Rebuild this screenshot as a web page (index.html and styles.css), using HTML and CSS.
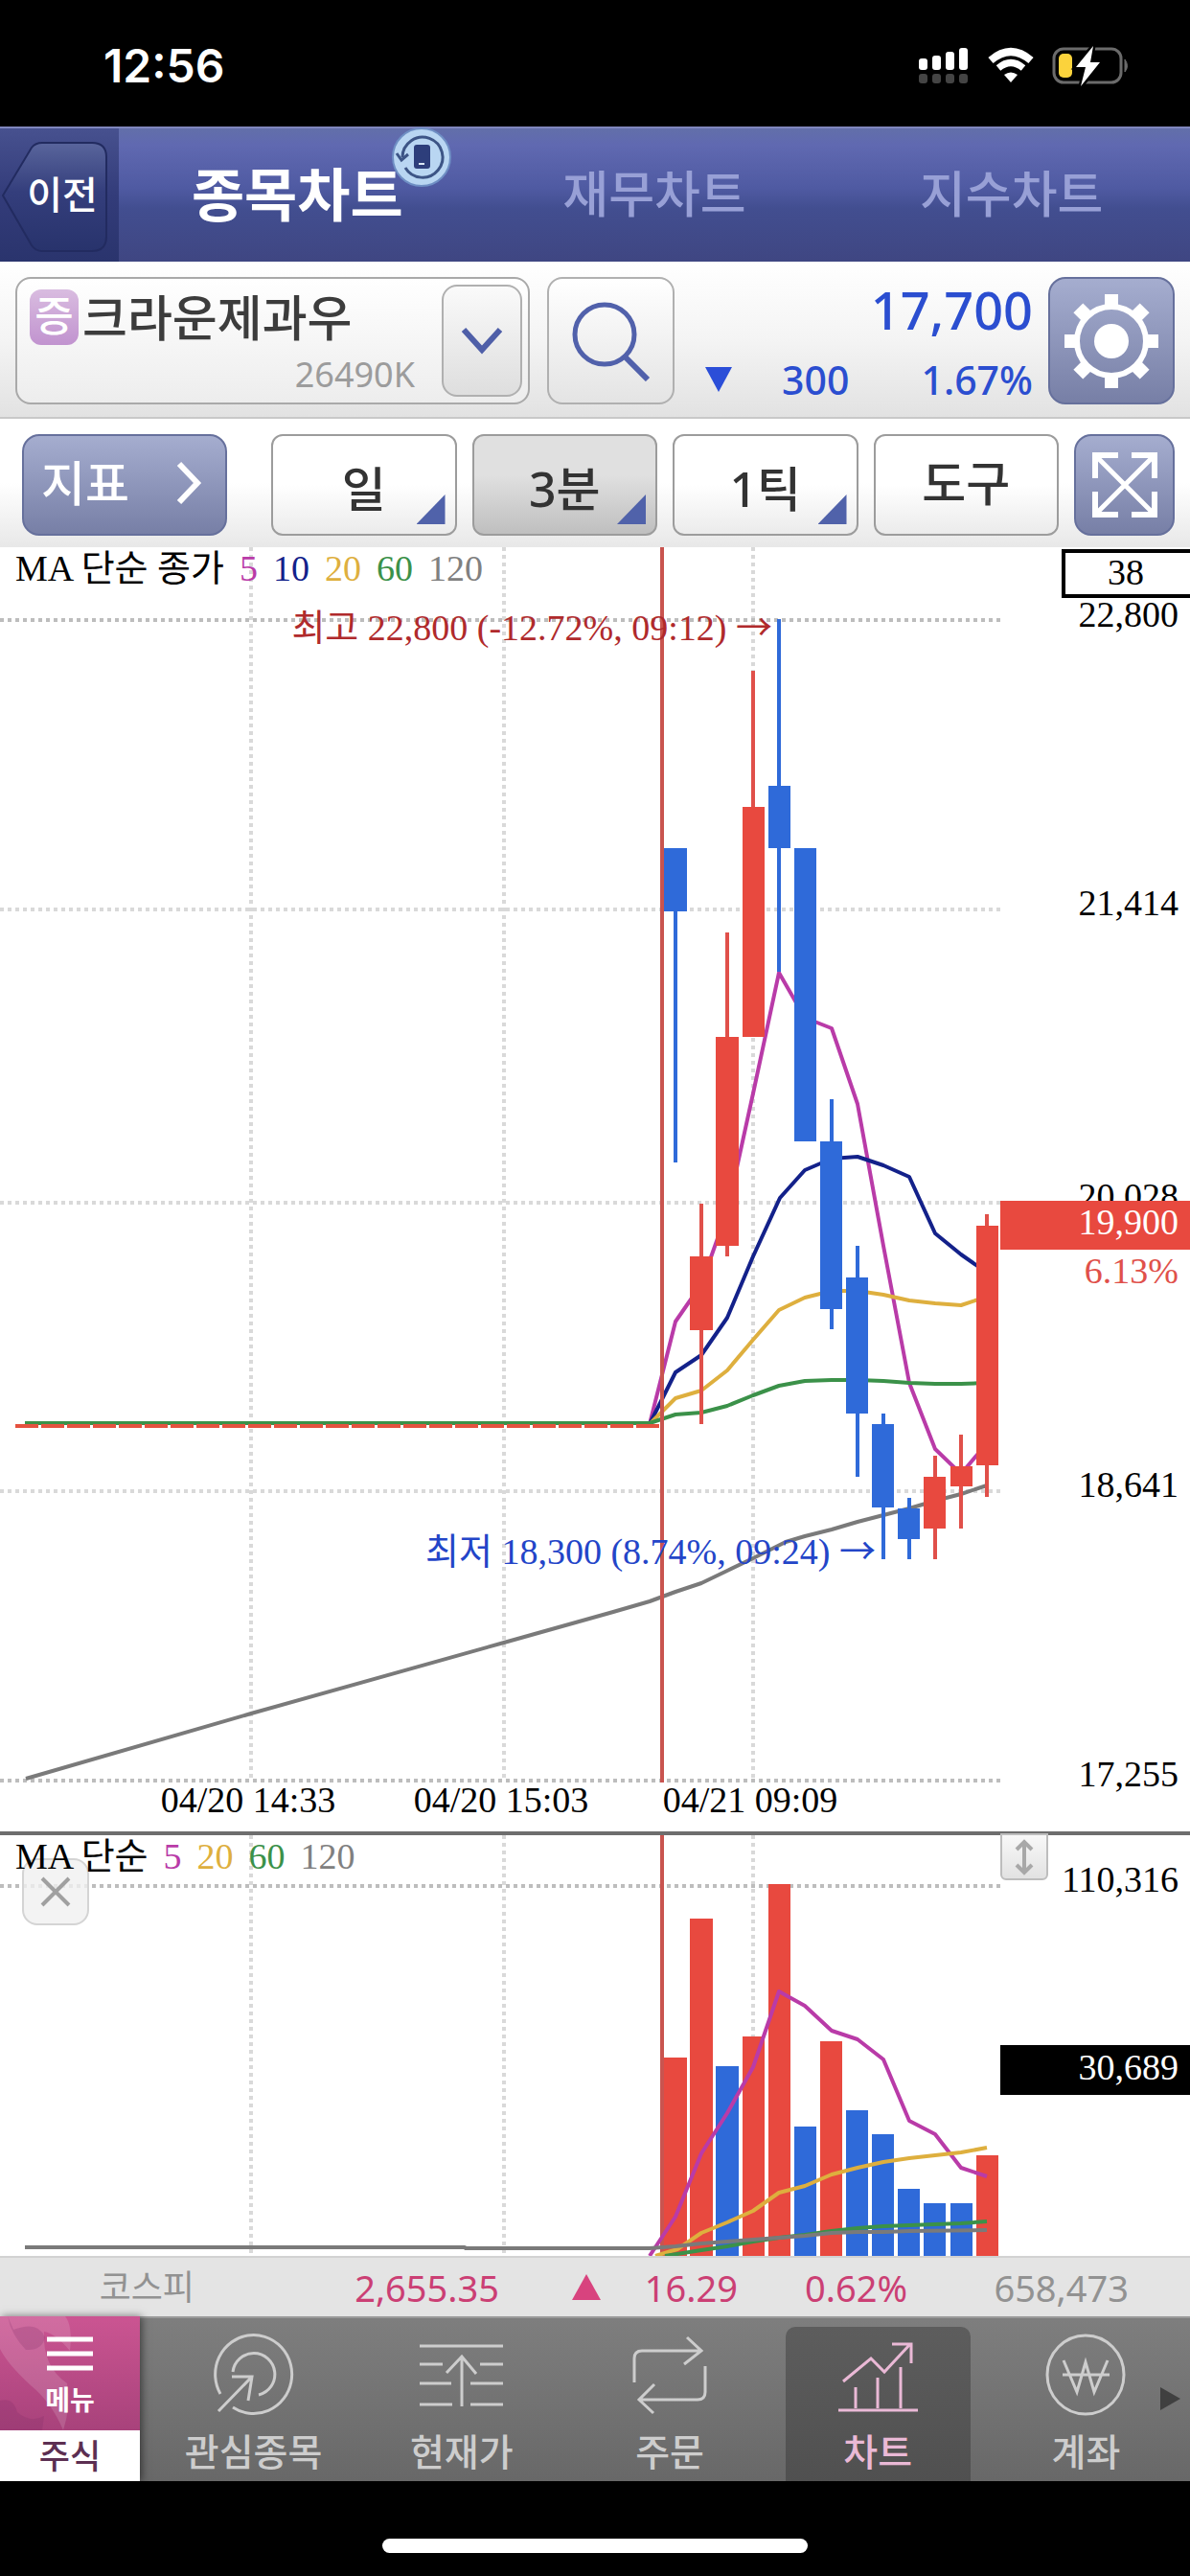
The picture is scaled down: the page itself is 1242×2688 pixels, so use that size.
FILE: index.html
```html
<!DOCTYPE html>
<html lang="ko">
<head>
    <meta charset="UTF-8">
    <meta name="viewport" content="width=device-width, initial-scale=1.0">
    <title>종목차트</title>
    <link rel="stylesheet" href="styles.css">
</head>
<body>
    <div class="status-bar">
        <span class="clock">12:56</span>
        <svg class="status-icons" width="222" height="44" viewBox="0 0 222 44">
            <g fill="#fff">
                <rect x="2" y="15" width="9" height="12" rx="3"/>
                <rect x="16" y="12" width="9" height="15" rx="3"/>
                <rect x="30" y="8" width="9" height="19" rx="3"/>
                <rect x="44" y="4" width="9" height="23" rx="3"/>
            </g>
            <g fill="#444">
                <rect x="2" y="31" width="9" height="10" rx="3"/>
                <rect x="16" y="31" width="9" height="10" rx="3"/>
                <rect x="30" y="31" width="9" height="10" rx="3"/>
                <rect x="44" y="31" width="9" height="10" rx="3"/>
            </g>
            <path d="M77 17 Q98 -1 119 17" fill="none" stroke="#fff" stroke-width="8"/>
            <path d="M85 25 Q98 14 111 25" fill="none" stroke="#fff" stroke-width="7"/>
            <path d="M91 32 Q98 27 105 32 L98 40 Z" fill="#fff"/>
            <rect x="143" y="5" width="70" height="35" rx="10" fill="none" stroke="#6b6b6b" stroke-width="3"/>
            <path d="M217 16 q5 7 0 13 z" fill="#6b6b6b" stroke="#6b6b6b"/>
            <rect x="148" y="10" width="14" height="25" rx="5" fill="#fbd33c"/>
            <path d="M184 2 L166 24 H176 L171 44 L191 19 H181 Z" fill="#fff" stroke="#000" stroke-width="5" paint-order="stroke"/>
        </svg>
    </div>

    <header class="header">
        <button class="back" type="button">
            <svg class="back-shape" width="124" height="141" viewBox="0 0 124 141">
                <defs>
                    <linearGradient id="backFill" x1="0" y1="0" x2="0" y2="1">
                        <stop offset="0" stop-color="#59659c"/>
                        <stop offset="0.45" stop-color="#343e7c"/>
                        <stop offset="1" stop-color="#28336c"/>
                    </linearGradient>
                </defs>
                <path d="M3 70 L33 20 Q37 15 44 15 H96 Q111 15 111 30 V113 Q111 128 96 128 H44 Q37 128 33 122 Z" fill="url(#backFill)" stroke="#222b60" stroke-width="2"/>
            </svg>
            <span class="back-text">이전</span>
        </button>
        <nav class="tabs">
            <a href="#" class="tab active">종목차트
                <svg class="rotate-badge" width="64" height="64" viewBox="0 0 64 64">
                    <circle cx="32" cy="32" r="30" fill="#b9d6f2" stroke="#6f8fc4" stroke-width="2"/>
                    <rect x="24" y="19" width="17" height="25" rx="3" fill="#2d3e7b"/>
                    <path d="M29 39 h6" stroke="#dbe8f7" stroke-width="2"/>
                    <path d="M12 32 A21 21 0 1 1 15 43" fill="none" stroke="#3d5586" stroke-width="3"/>
                    <path d="M6 28 L11 35 L18 29" fill="none" stroke="#3d5586" stroke-width="3"/>
                </svg>
            </a>
            <a href="#" class="tab">재무차트</a>
            <a href="#" class="tab">지수차트</a>
        </nav>
    </header>

    <section class="stock">
        <div class="picker">
            <div class="picker-info">
                <div class="picker-name"><span class="margin-badge">증</span>크라운제과우</div>
                <div class="picker-code">26490K</div>
            </div>
            <button class="picker-open" type="button" aria-label="종목 목록">
                <svg width="44" height="30" viewBox="0 0 44 30"><path d="M3 3 L22 24 L41 3" fill="none" stroke="#4f5fa8" stroke-width="6"/></svg>
            </button>
        </div>
        <button class="search" type="button" aria-label="검색">
            <svg width="84" height="84" viewBox="0 0 84 84">
                <circle cx="35" cy="35" r="31" fill="none" stroke="#5161ab" stroke-width="5"/>
                <path d="M56 58 L80 82" stroke="#5161ab" stroke-width="6"/>
            </svg>
        </button>
        <div class="quote">
            <div class="price">17,700</div>
            <div class="change">
                <svg width="28" height="26" viewBox="0 0 28 26"><path d="M0 0 H28 L14 26 Z" fill="#2b4ed8"/></svg>
                <span class="diff">300</span>
                <span class="rate">1.67%</span>
            </div>
        </div>
        <button class="settings" type="button" aria-label="설정">
            <svg width="100" height="100" viewBox="-50 -50 100 100">
                <g fill="#fff">
                    <g id="teeth"><rect x="-7" y="-49" width="14" height="13"/><rect x="-7" y="36" width="14" height="13"/></g>
                    <use href="#teeth" transform="rotate(45)"/>
                    <use href="#teeth" transform="rotate(90)"/>
                    <use href="#teeth" transform="rotate(135)"/>
                    <circle r="18"/>
                </g>
                <circle r="36" fill="none" stroke="#fff" stroke-width="6"/>
            </svg>
        </button>
    </section>

    <section class="toolbar">
        <button class="tool indicator" type="button">지표
            <svg width="28" height="46" viewBox="0 0 28 46"><path d="M4 3 L23 23 L4 43" fill="none" stroke="#fff" stroke-width="6"/></svg>
        </button>
        <div class="periods">
            <button class="tool period" type="button">일</button>
            <button class="tool period selected" type="button">3분</button>
            <button class="tool period" type="button">1틱</button>
            <button class="tool" type="button">도구</button>
        </div>
        <button class="tool expand" type="button" aria-label="전체화면">
            <svg width="70" height="70" viewBox="0 0 70 70" fill="none" stroke="#fff" stroke-width="6">
                <path d="M4 28 V4 H28 M42 4 H66 V28 M66 42 V66 H42 M28 66 H4 V42"/>
                <path d="M4 4 L66 66 M66 4 L4 66" stroke-width="5"/>
            </svg>
        </button>
    </section>

    <main>
        <section class="pane price-pane">
            <svg class="plot" viewBox="0 0 1242 1340">
                <g class="grid">
                    <path d="M262 0 V1287 M526 0 V1287 M786 0 V1287 M0 378 H1044 M0 684 H1044 M0 985 H1044"/>
                    <path class="edge" d="M0 76 H1044 M0 1287 H1044"/>
                </g>
                <g class="ma">
                    <polyline class="ma120" points="27,1285 262,1217 526,1143 640,1111 678,1100 705,1090 732,1081 759,1068 786,1055 820,1038 840,1032 868,1025 895,1017 922,1010 949,1003 976,995 1003,988 1030,979"/>
                    <polyline class="ma5" points="678,915 705,808 732,769 759,693 786,570 813,444 840,491 868,502 895,581 922,729 949,872 976,941 1003,967 1030,935"/>
                    <polyline class="ma10" points="678,915 705,861 732,843 759,804 786,740 814,679 840,650 868,638 895,636 922,645 949,657 976,716 1003,738 1030,757"/>
                    <polyline class="ma20" points="678,915 705,888 732,880 759,859 786,827 813,796 840,783 868,776 895,776 922,780 949,786 976,789 1003,791 1030,782"/>
                    <polyline class="ma60" points="26,914 678,914 705,905 732,903 759,896 786,885 813,875 840,870 868,869 895,869 922,870 949,872 976,873 1003,873 1030,872"/>
                </g>
                <path class="flat" d="M16 917 H691"/>
                <path class="session" d="M691 0 V1289"/>
                <g class="down">
                    <path d="M705 380 V642 M813 75 V443 M868 576 V816 M895 729 V970 M922 904 V1056 M949 992 V1056"/>
                    <rect x="693" y="314" width="24" height="66"/>
                    <rect x="802" y="249" width="23" height="65"/>
                    <rect x="829" y="314" width="23" height="306"/>
                    <rect x="856" y="620" width="23" height="175"/>
                    <rect x="883" y="762" width="23" height="142"/>
                    <rect x="910" y="915" width="23" height="87"/>
                    <rect x="937" y="1003" width="23" height="32"/>
                </g>
                <g class="up">
                    <path d="M732 685 V915 M759 402 V740 M786 129 V511 M976 948 V1056 M1003 926 V1024 M1030 696 V991"/>
                    <rect x="720" y="740" width="24" height="77"/>
                    <rect x="747" y="511" width="24" height="218"/>
                    <rect x="775" y="271" width="23" height="240"/>
                    <rect x="964" y="970" width="23" height="54"/>
                    <rect x="992" y="959" width="23" height="21"/>
                    <rect x="1019" y="708" width="23" height="250"/>
                </g>
                <text class="high" x="806" y="97" text-anchor="end">최고 22,800 (-12.72%, 09:12) <tspan class="arrow">→</tspan></text>
                <text class="low" x="914" y="1061" text-anchor="end">최저 18,300 (8.74%, 09:24) <tspan class="arrow">→</tspan></text>
                <g class="axis" text-anchor="end">
                    <text x="1230" y="83">22,800</text>
                    <text x="1230" y="384">21,414</text>
                    <text x="1230" y="690">20,028</text>
                    <text x="1230" y="991">18,641</text>
                    <text x="1230" y="1293">17,255</text>
                </g>
                <g class="axis" text-anchor="middle">
                    <text x="259" y="1320">04/20 14:33</text>
                    <text x="523" y="1320">04/20 15:03</text>
                    <text x="783" y="1320">04/21 09:09</text>
                </g>
                <rect x="1110" y="4" width="140" height="47" fill="#fff" stroke="#000" stroke-width="4"/>
                <text x="1175" y="39" text-anchor="middle">38</text>
                <rect x="1044" y="682" width="198" height="51" fill="#e8493f"/>
                <text class="tag" x="1230" y="717" text-anchor="end">19,900</text>
                <text class="tag-rate" x="1230" y="768" text-anchor="end">6.13%</text>
            </svg>
            <div class="legend">
                <span>MA 단순 종가</span>
                <span class="c5">5</span>
                <span class="c10">10</span>
                <span class="c20">20</span>
                <span class="c60">60</span>
                <span class="c120">120</span>
            </div>
        </section>

        <section class="pane volume-pane">
            <svg class="plot" viewBox="0 0 1242 439">
                <g class="grid">
                    <path d="M262 0 V439 M526 0 V439 M786 0 V439"/>
                    <path class="edge" d="M0 53 H1044"/>
                </g>
                <path class="session" d="M691 0 V439"/>
                <g class="up">
                    <rect x="693" y="232" width="24" height="207"/>
                    <rect x="720" y="87" width="24" height="352"/>
                    <rect x="775" y="210" width="23" height="229"/>
                    <rect x="802" y="51" width="23" height="388"/>
                    <rect x="856" y="215" width="23" height="224"/>
                    <rect x="1019" y="334" width="23" height="105"/>
                </g>
                <g class="down">
                    <rect x="747" y="241" width="24" height="198"/>
                    <rect x="829" y="304" width="23" height="135"/>
                    <rect x="883" y="287" width="23" height="152"/>
                    <rect x="910" y="312" width="23" height="127"/>
                    <rect x="937" y="369" width="23" height="70"/>
                    <rect x="964" y="384" width="23" height="55"/>
                    <rect x="992" y="384" width="23" height="55"/>
                </g>
                <g class="ma">
                    <polyline class="ma5" points="678,439 705,398 732,332 759,290 786,242 813,163 840,178 868,204 895,213 922,234 949,298 976,312 1003,347 1030,356"/>
                    <polyline class="ma20" points="684,439 707,432 732,415 759,404 786,392 813,373 840,366 868,354 895,347 922,341 949,337 976,334 1003,331 1030,326"/>
                    <polyline class="ma60" points="694,439 732,433 759,429 786,424 813,420 840,417 868,413 895,410 922,408 949,407 976,406 1003,405 1030,403"/>
                    <polyline class="ma120" points="26,430 485,430 486,431 678,431 705,429 732,426 759,424 786,422 813,420 840,418 868,415 895,414 922,414 949,413 1030,412"/>
                </g>
                <text x="1230" y="59" text-anchor="end">110,316</text>
                <rect x="1044" y="219" width="198" height="52"/>
                <text class="tag" x="1230" y="255" text-anchor="end">30,689</text>
            </svg>
            <button class="close-pane" type="button" aria-label="닫기">
                <svg width="32" height="32" viewBox="0 0 32 32"><path d="M2 2 L30 30 M30 2 L2 30" stroke="#a0a0a0" stroke-width="4"/></svg>
            </button>
            <button class="resize-pane" type="button" aria-label="크기 조절">
                <svg width="20" height="38" viewBox="0 0 20 38" fill="none" stroke="#a8a8a8" stroke-width="4"><path d="M10 3 V35 M2 11 L10 3 L18 11 M2 27 L10 35 L18 27"/></svg>
            </button>
            <div class="legend">
                <span>MA 단순</span>
                <span class="c5">5</span>
                <span class="c20">20</span>
                <span class="c60">60</span>
                <span class="c120">120</span>
            </div>
        </section>
    </main>

    <div class="index-bar">
        <span class="muted">코스피</span>
        <span>2,655.35</span>
        <span><svg width="30" height="27" viewBox="0 0 30 27"><path d="M15 0 L30 27 H0 Z" fill="#d8437e"/></svg></span>
        <span>16.29</span>
        <span>0.62%</span>
        <span class="muted">658,473</span>
    </div>

    <nav class="bottom-nav">
        <div class="menu">
            <button class="menu-open" type="button">
                <svg class="menu-pattern" viewBox="0 0 146 119" preserveAspectRatio="xMinYMin slice">
                    <path d="M0 0 H68 Q76 10 73 36 Q58 18 46 16 Q44 52 70 70 Q74 94 66 119 Q54 90 32 72 Q8 50 0 34 Z" fill="#fff" opacity="0.14"/>
                    <path d="M8 0 Q12 20 27 35 Q44 36 47 22 Q40 4 14 14 Z M0 88 Q14 84 18 100 Q32 112 46 104 L44 119 H0 Z" fill="#7d2a66" opacity="0.22"/>
                </svg>
                <svg class="menu-lines" width="48" height="36" viewBox="0 0 48 36"><path d="M0 3 H48 M0 18 H48 M0 33 H48" stroke="#fff" stroke-width="5"/></svg>
                <span>메뉴</span>
            </button>
            <a href="#" class="menu-stock">주식</a>
        </div>
        <div class="nav-items">
            <a href="#" class="nav-item">
                <svg class="nav-icon" viewBox="0 0 90 90">
                    <path d="M10 65 A40 41 0 1 1 23 79"/>
                    <path d="M23 42 A22 22 0 1 1 50 66"/>
                    <path d="M8 83 L42 48 M22 47 H43 L39 72"/>
                </svg>
                <span>관심종목</span>
            </a>
            <a href="#" class="nav-item">
                <svg class="nav-icon" viewBox="0 0 90 90">
                    <path d="M1 15 H88 M1 34 H25 M64 34 H88 M1 54 H34 M54 54 H88 M1 76 H35 M54 76 H88"/>
                    <path d="M45 78 V26 M29 43 L45 26 L60 44"/>
                </svg>
                <span>현재가</span>
            </a>
            <a href="#" class="nav-item">
                <svg class="nav-icon" viewBox="0 0 90 90">
                    <path d="M8 53 V28 Q8 20 16 20 H78 M63 6 L78 20 L60 34"/>
                    <path d="M82 36 V63 Q82 71 74 71 H13 M29 55 L13 71 L28 85"/>
                </svg>
                <span>주문</span>
            </a>
            <a href="#" class="nav-item current">
                <svg class="nav-icon" viewBox="0 0 90 90">
                    <path d="M4 82 H87 M22 58 V80 M45 48 V80 M69 37 V80"/>
                    <path d="M9 52 L38 28 L52 42 L79 13 M60 13 H80 V33"/>
                </svg>
                <span>차트</span>
            </a>
            <a href="#" class="nav-item">
                <svg class="nav-icon" viewBox="0 0 90 90">
                    <ellipse cx="45" cy="45" rx="40" ry="41"/>
                    <path d="M22 30 L36 63 L45 32 L54 63 L68 30 M21 45 H70"/>
                </svg>
                <span>계좌</span>
            </a>
        </div>
        <svg class="nav-more" width="21" height="24" viewBox="0 0 21 24"><path d="M0 0 L21 12 L0 24 Z" fill="#404040"/></svg>
    </nav>

    <div class="home-area"><div class="home-indicator"></div></div>
</body>
</html>
```

FILE: styles.css
```css
* {
    box-sizing: border-box;
}
body {
    margin: 0;
    background: #000;
    font-family: "Noto Sans", "Noto Sans CJK KR", sans-serif;
    color: #3c3c3c;
}
button {
    margin: 0;
    padding: 0;
    border: none;
    background: none;
    font: inherit;
    color: inherit;
    cursor: pointer;
}
a {
    color: inherit;
    text-decoration: none;
}
svg {
    display: block;
    flex: none;
}

/* status bar */
.status-bar {
    display: flex;
    justify-content: space-between;
    align-items: center;
    height: 132px;
    padding: 4px 63px 0 108px;
    color: #fff;
}
.clock {
    font-family: Inter, sans-serif;
    font-weight: 600;
    font-size: 48px;
}

/* header */
.header {
    display: flex;
    height: 141px;
    background: linear-gradient(#626fa9, #6069b1 12%, #4f5aa2 45%, #424e90 60%, #3f4682);
    border-top: 2px solid #7f86bd;
}
.back {
    position: relative;
    width: 124px;
    padding-bottom: 6px;
    background: linear-gradient(#47518f, #333c7a 50%, #2a346d);
}
.back-shape {
    position: absolute;
    left: 0;
    top: 0;
}
.back-text {
    position: relative;
    padding-left: 6px;
    font-size: 40px;
    font-weight: 500;
    color: #fff;
}
.tabs {
    display: flex;
    flex: 1;
}
.tab {
    flex: 1;
    display: flex;
    justify-content: center;
    align-items: center;
    position: relative;
    padding-bottom: 8px;
    font-size: 52px;
    font-weight: 500;
    color: #98a0d6;
}
.tab.active {
    font-size: 60px;
    font-weight: 700;
    color: #fff;
}
.rotate-badge {
    position: absolute;
    top: -2px;
    left: calc(50% + 98px);
}

/* selected stock */
.stock {
    display: flex;
    height: 164px;
    padding: 16px 16px 14px;
    background: linear-gradient(#fff, #f4f4f4 50%, #e2e2e2);
    border-bottom: 2px solid #c8c8c8;
}
.picker {
    display: flex;
    flex: 1;
    height: 133px;
    margin-right: 18px;
    padding: 6px;
    border: 2px solid #a9a9a9;
    border-radius: 16px;
    background: linear-gradient(#fff, #ededed);
}
.picker-info {
    flex: 1;
    padding: 0 28px 0 7px;
}
.picker-name {
    display: flex;
    align-items: center;
    height: 68px;
    gap: 4px;
    font-size: 51px;
    font-weight: 500;
    line-height: 64px;
    white-space: nowrap;
}
.margin-badge {
    width: 51px;
    height: 58px;
    border-radius: 12px;
    background: linear-gradient(#d9bce0, #c193cf);
    color: #fff;
    font-size: 44px;
    line-height: 54px;
    text-align: center;
}
.picker-code {
    font-size: 36px;
    line-height: 52px;
    text-align: right;
    color: #9c9c9c;
}
.picker-open,
.search {
    display: flex;
    justify-content: center;
    align-items: center;
    border: 2px solid #b0b0b0;
    border-radius: 16px;
    background: linear-gradient(#fafafa, #dedede);
}
.picker-open {
    width: 84px;
}
.search {
    width: 133px;
    height: 133px;
    background: linear-gradient(#fff, #e4e4e4);
}
.quote {
    width: 374px;
    margin-right: 16px;
    color: #2b4ed0;
    font-weight: 500;
}
.price {
    font-size: 54px;
    line-height: 68px;
    text-align: right;
}
.change {
    display: flex;
    align-items: center;
    padding-left: 32px;
    font-size: 41px;
    line-height: 78px;
}
.diff {
    margin-left: 52px;
}
.rate {
    margin-left: auto;
}
.settings,
.indicator,
.expand {
    display: flex;
    align-items: center;
    justify-content: center;
    border: 2px solid #66709c;
    border-radius: 18px;
    background: linear-gradient(#a5adcf, #777fa6);
    color: #fff;
}
.settings {
    width: 132px;
    height: 133px;
}

/* chart toolbar */
.toolbar {
    display: flex;
    height: 134px;
    padding: 16px 16px 12px 23px;
    background: linear-gradient(#fff, #fff 50%, #e8e8e8);
}
.tool {
    height: 106px;
    padding-bottom: 4px;
    font-size: 50px;
    font-weight: 500;
    line-height: 60px;
}
.toolbar .indicator {
    width: 214px;
    gap: 48px;
    padding-right: 6px;
}
.periods {
    display: flex;
    flex: 1;
    gap: 16px;
    padding: 0 16px 0 46px;
}
.periods .tool {
    flex: 1;
    position: relative;
    border: 2px solid #9c9c9c;
    border-radius: 12px;
    background: linear-gradient(#fff 50%, #ebebeb);
    color: #333;
}
.periods .period {
    padding-top: 12px;
}
.periods .period::after {
    content: "";
    position: absolute;
    right: 10px;
    bottom: 10px;
    width: 30px;
    height: 31px;
    background: #5062aa;
    clip-path: polygon(100% 0, 100% 100%, 0 100%);
}
.periods .selected {
    background: linear-gradient(#e0e0e0 40%, #bfbfbf);
}
.toolbar .expand {
    width: 105px;
    padding: 0;
}

/* chart panes */
.pane {
    position: relative;
    background: #fff;
    font-family: "Liberation Serif", "Noto Sans CJK KR", serif;
    font-size: 38px;
    color: #000;
}
.volume-pane {
    border-top: 4px solid #6e6e6e;
}
.plot {
    width: 100%;
    height: auto;
}
.grid path {
    fill: none;
    stroke: #d9d9d9;
    stroke-width: 4;
    stroke-dasharray: 4 4;
}
.grid .edge {
    stroke: #bdbdbd;
}
.session {
    stroke: #c9544f;
    stroke-width: 4;
}
.flat {
    stroke: #e5523f;
    stroke-width: 4;
    stroke-dasharray: 24 3;
}
.ma polyline {
    fill: none;
    stroke-width: 4;
    stroke-linejoin: round;
}
.ma .ma5 { stroke: #b93ba8; }
.ma .ma10 { stroke: #13218a; }
.ma .ma20 { stroke: #deaf3e; }
.ma .ma60 { stroke: #3b9149; }
.ma .ma120 { stroke: #7a7a7a; }
.up {
    fill: #e8493f;
    stroke: none;
}
.down {
    fill: #2f6ad9;
}
.up path {
    stroke: #e0504a;
    stroke-width: 4;
}
.down path {
    stroke: #2f6ad9;
    stroke-width: 4;
}
.high { fill: #b02a2c; }
.low { fill: #2345c8; }
.arrow { font-family: "Noto Sans CJK KR", sans-serif; }
.tag { fill: #fff; }
.tag-rate { fill: #e0504a; }
.legend {
    position: absolute;
    top: 0;
    left: 16px;
    display: flex;
    gap: 16px;
    line-height: 44px;
    white-space: nowrap;
}
.c5 { color: #b93ba8; }
.c10 { color: #13218a; }
.c20 { color: #deaf3e; }
.c60 { color: #3b9149; }
.c120 { color: #808080; }
.close-pane,
.resize-pane {
    position: absolute;
    display: flex;
    justify-content: center;
    align-items: center;
    border: 2px solid #d4d4d4;
    background: rgba(240, 240, 240, 0.8);
}
.close-pane {
    left: 23px;
    top: 24px;
    width: 70px;
    height: 70px;
    border-radius: 16px;
}
.resize-pane {
    right: 148px;
    top: -2px;
    width: 50px;
    height: 49px;
    border-color: #bdbdbd;
    border-radius: 0 0 6px 6px;
    background: linear-gradient(#f8f8f8, #e2e2e2);
}

/* market index */
.index-bar {
    display: grid;
    grid-template-columns: 203fr 318fr 106fr 143fr 177fr 231fr 64fr;
    align-items: center;
    height: 63px;
    border-top: 2px solid #d2d2d2;
    background: #e4e4e4;
    font-size: 38px;
    line-height: 58px;
    color: #cb3f74;
}
.index-bar span {
    display: flex;
    justify-content: flex-end;
}
.index-bar .muted {
    color: #929292;
}
.index-bar .muted:first-child {
    font-size: 36px;
}

/* bottom navigation */
.bottom-nav {
    display: flex;
    position: relative;
    height: 172px;
    border-top: 2px solid #9a9a9a;
    background: linear-gradient(#7e7e7e, #686868);
}
.menu {
    display: flex;
    flex-direction: column;
    width: 146px;
    margin-top: -2px;
    box-shadow: 2px 0 8px rgba(0, 0, 0, 0.5);
}
.menu-open {
    position: relative;
    display: flex;
    flex-direction: column;
    align-items: center;
    height: 119px;
    padding-top: 21px;
    background: linear-gradient(#cb5592, #a8427b);
    color: #fff;
    font-size: 28px;
    font-weight: 700;
    line-height: 60px;
}
.menu-pattern {
    position: absolute;
    left: 0;
    top: 0;
    width: 100%;
    height: 100%;
}
.menu-lines,
.menu-open span {
    position: relative;
}
.menu-stock {
    height: 53px;
    background: #fff;
    color: #5c2f52;
    font-size: 35px;
    font-weight: 500;
    line-height: 54px;
    text-align: center;
}
.nav-items {
    display: flex;
    flex: 1;
    padding-left: 10px;
}
.nav-item {
    flex: 1;
    display: flex;
    flex-direction: column;
    align-items: center;
    margin: 9px 12px 0;
    padding-top: 5px;
    font-size: 39px;
    font-weight: 500;
    line-height: 70px;
    color: #cdcdcd;
    white-space: nowrap;
}
.nav-item span {
    height: 66px;
}
.nav-icon {
    width: 90px;
    height: 90px;
    fill: none;
    stroke: currentColor;
    stroke-width: 3;
}
.nav-item.current {
    border-radius: 10px 10px 0 0;
    background: linear-gradient(#5d5d5d, #505050);
    color: #eab9d6;
}
.nav-more {
    position: absolute;
    right: 10px;
    top: 72px;
}

/* home indicator */
.home-area {
    display: flex;
    justify-content: center;
    height: 99px;
    padding-top: 60px;
}
.home-indicator {
    width: 444px;
    height: 15px;
    border-radius: 8px;
    background: #fff;
}
```
